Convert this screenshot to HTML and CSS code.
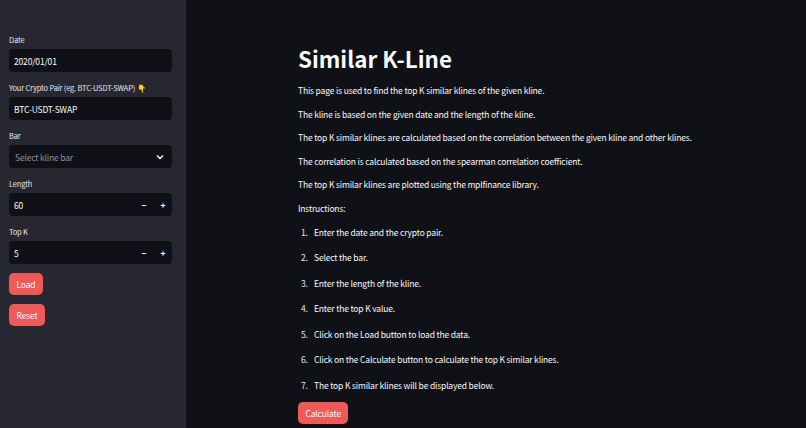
FILE: index.html
```html
<!DOCTYPE html>
<html lang="en">
<head>
<meta charset="utf-8">
<title>Similar K-Line</title>
<link rel="stylesheet" href="styles.css">
</head>
<body>
<div class="app">
  <aside class="sidebar">
    <div class="field"><label>Date</label><div class="input">2020/01/01</div></div>
    <div class="field"><label>Your Crypto Pair (eg. BTC-USDT-SWAP) <span class="hand">👇</span></label><div class="input">BTC-USDT-SWAP</div></div>
    <div class="field"><label>Bar</label><div class="input select"><span class="placeholder">Select kline bar</span>
      <svg class="chev" viewBox="0 0 10 10" width="10" height="10"><path d="M2 3.5 5 6.5 8 3.5" fill="none" stroke="#fafafa" stroke-width="1.5"/></svg></div></div>
    <div class="field"><label>Length</label><div class="input number"><span>60</span><span class="steps"><b>−</b><b>+</b></span></div></div>
    <div class="field"><label>Top K</label><div class="input number"><span>5</span><span class="steps"><b>−</b><b>+</b></span></div></div>
    <div class="side-buttons">
      <button class="btn">Load</button>
      <button class="btn">Reset</button>
    </div>
  </aside>
  <main class="main">
    <h1>Similar K-Line</h1>
    <p>This page is used to find the top K similar klines of the given kline.</p>
    <p>The kline is based on the given date and the length of the kline.</p>
    <p>The top K similar klines are calculated based on the correlation between the given kline and other klines.</p>
    <p>The correlation is calculated based on the spearman correlation coefficient.</p>
    <p>The top K similar klines are plotted using the mplfinance library.</p>
    <p>Instructions:</p>
    <ol>
      <li>Enter the date and the crypto pair.</li>
      <li>Select the bar.</li>
      <li>Enter the length of the kline.</li>
      <li>Enter the top K value.</li>
      <li>Click on the Load button to load the data.</li>
      <li>Click on the Calculate button to calculate the top K similar klines.</li>
      <li>The top K similar klines will be displayed below.</li>
    </ol>
    <button class="btn calc">Calculate</button>
  </main>
</div>
</body>
</html>
```
FILE: styles.css
```css
html, body { margin: 0; height: 100%; overflow: hidden; }
body {
  background: #0f1116;
  color: #fafafa;
  font-family: "Noto Sans CJK SC", "Noto Sans", sans-serif;
  font-size: 8.5px;
  letter-spacing: -0.17px;
}
.app { display: flex; height: 428px; }
.sidebar {
  width: 186px;
  box-sizing: border-box;
  background: #262730;
  padding: 35px 14px 0 9px;
  display: flex;
  flex-direction: column;
}
.field { display: flex; flex-direction: column; margin-bottom: 11px; }
.field label { font-size: 7.5px; letter-spacing: -0.18px; line-height: 10px; height: 10px; margin-bottom: 4px; color: #e6e6e8; }
.hand { font-size: 7.5px; }
.input {
  height: 23px;
  box-sizing: border-box;
  background: #0f1116;
  border-radius: 4px;
  padding: 0 5px;
  display: flex;
  align-items: center;
  justify-content: space-between;
}
.placeholder { color: #8e8f96; padding-left: 1px; }
.chev { margin-right: 2px; }
.steps { display: flex; gap: 11px; }
.steps b { width: 8px; text-align: center; font-weight: 700; }
.side-buttons { display: flex; flex-direction: column; align-items: flex-start; gap: 9px; margin-top: -2px; }
.btn {
  background: #ee5a5a;
  color: #fafafa;
  border: 0;
  border-radius: 5px;
  height: 22px;
  padding: 0 7.5px;
  font: inherit;
  letter-spacing: inherit;
}
.main { flex: 1; padding: 43px 0 0 112px; }
h1 { margin: 0 0 10px; font-size: 22.4px; letter-spacing: 0; line-height: 30px; font-weight: 700; }
p { margin: 0 0 8.6px; line-height: 15px; }
ol { margin: 2px 0 0; padding: 0 0 0 3px; list-style: none; counter-reset: step; }
li { line-height: 15px; margin-bottom: 10.5px; display: flex; counter-increment: step; }
li::before { content: counter(step) "."; width: 13px; color: #e6e6e8; }
.calc { display: block; margin-top: -1px; }
```
